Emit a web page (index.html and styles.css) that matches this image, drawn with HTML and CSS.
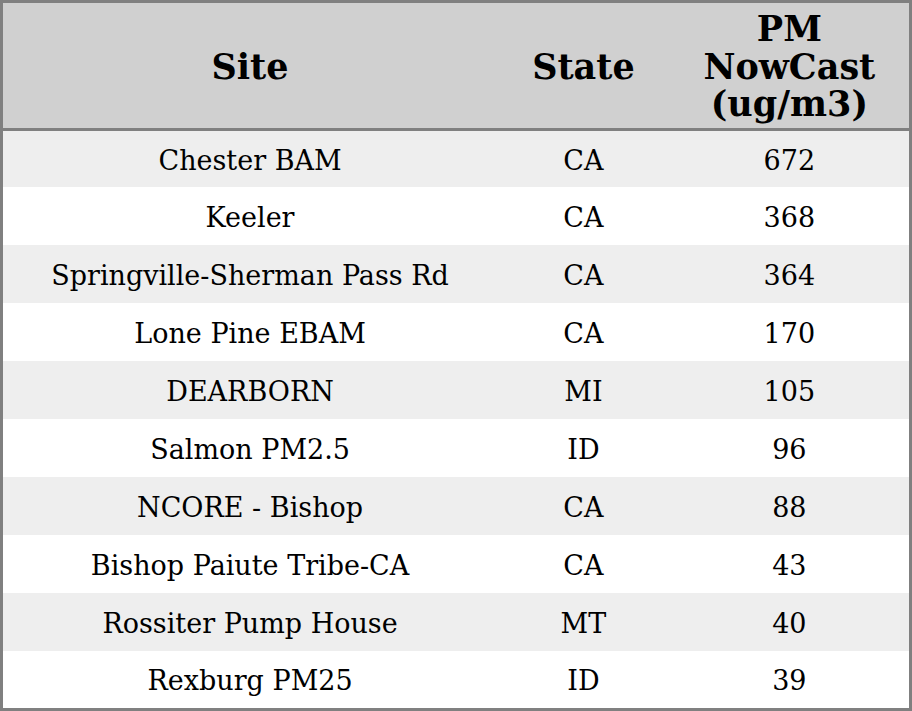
FILE: index.html
```html
<!DOCTYPE html>
<html>
<head>
<meta charset="utf-8">
<link rel="stylesheet" href="styles.css">
</head>
<body>
<table class="aq">
  <colgroup>
    <col class="c-site">
    <col class="c-state">
    <col class="c-pm">
  </colgroup>
  <thead>
    <tr class="head">
      <th>Site</th>
      <th>State</th>
      <th>PM<br>NowCast<br>(ug/m3)</th>
    </tr>
  </thead>
  <tbody>
    <tr class="first"><td>Chester BAM</td><td>CA</td><td>672</td></tr>
    <tr><td>Keeler</td><td>CA</td><td>368</td></tr>
    <tr><td>Springville-Sherman Pass Rd</td><td>CA</td><td>364</td></tr>
    <tr><td>Lone Pine EBAM</td><td>CA</td><td>170</td></tr>
    <tr><td>DEARBORN</td><td>MI</td><td>105</td></tr>
    <tr><td>Salmon PM2.5</td><td>ID</td><td>96</td></tr>
    <tr><td>NCORE - Bishop</td><td>CA</td><td>88</td></tr>
    <tr><td>Bishop Paiute Tribe-CA</td><td>CA</td><td>43</td></tr>
    <tr><td>Rossiter Pump House</td><td>MT</td><td>40</td></tr>
    <tr class="last"><td>Rexburg PM25</td><td>ID</td><td>39</td></tr>
  </tbody>
</table>
</body>
</html>
```
FILE: styles.css
```css
html, body {
  margin: 0;
  padding: 0;
  background: #ffffff;
}
.aq {
  width: 912px;
  height: 711px;
  border-collapse: collapse;
  border: 3px solid #808080;
  table-layout: fixed;
  font-family: "DejaVu Serif", serif;
  color: #000;
}
.c-site { width: 494px; }
.c-state { width: 172px; }
.c-pm { width: 240px; }
.head th {
  height: 123px;
  padding: 2px 0 0;
  background: #d0d0d0;
  border-bottom: 3px solid #808080;
  font-size: 35px;
  font-weight: bold;
  line-height: 37.5px;
  text-align: center;
  vertical-align: middle;
}
.aq td {
  padding: 2px 0 0;
  height: 56px;
  font-size: 27px;
  text-align: center;
  vertical-align: middle;
}
.aq tr.first td { height: 54px; }
.aq tr.last td { height: 55px; }
.aq tbody tr:nth-child(odd) td {
  background: #eeeeee;
}
```
